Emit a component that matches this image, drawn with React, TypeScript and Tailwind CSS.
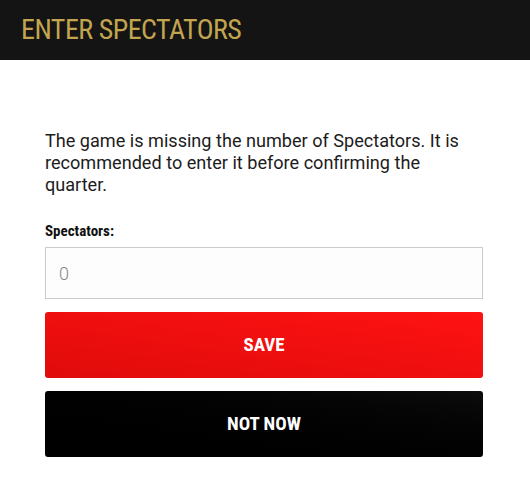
export default function App() {
  return (
    <div className="min-h-[503px] w-[530px] bg-white font-['Roboto',sans-serif]">
      <div className="flex h-[60px] items-center bg-[#141414] px-[21px]">
        <h1 className="text-[28px] leading-none tracking-[-0.5px] text-[#c3a54f] [font-stretch:condensed]">
          ENTER SPECTATORS
        </h1>
      </div>
      <div className="ml-[45px] flex w-[438px] flex-col pt-[70px]">
        <p className="text-[18.1px] leading-[22px] text-[#1c1c1c]">
          The game is missing the number of Spectators. It is recommended to enter it before confirming the quarter.
        </p>
        <label className="mt-[28px] text-[15px] font-bold leading-[14px] text-[#111] [font-stretch:condensed]">
          Spectators:
        </label>
        <input
          type="text"
          placeholder="0"
          className="mt-[9px] h-[52px] w-full border border-[#cccccc] bg-[#fdfdfd] px-[13px] text-[18px] font-light text-[#777] outline-none placeholder:text-[#888]"
        />
        <button className="mt-[13px] h-[66px] w-full rounded-[3px] bg-gradient-to-tr from-[#e00b0b] to-[#ff1212] text-[19px] font-bold text-white [font-stretch:condensed]">
          SAVE
        </button>
        <button className="mt-[13px] h-[66px] w-full rounded-[3px] bg-gradient-to-tr from-[#000] to-[#0c0c0c] text-[19px] font-bold text-white [font-stretch:condensed]">
          NOT NOW
        </button>
      </div>
    </div>
  );
}
